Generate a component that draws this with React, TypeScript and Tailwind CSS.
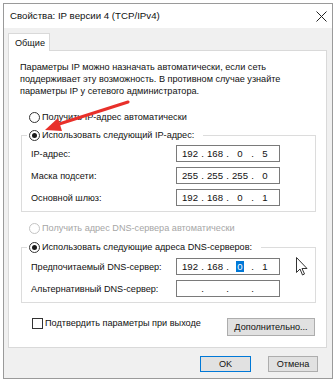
import React from "react";

const Radio = ({ checked = false, disabled = false }: { checked?: boolean; disabled?: boolean }) => (
  <span
    className={
      disabled
        ? "w-[11px] h-[11px] rounded-full border border-[#c4c4c4] bg-white flex items-center justify-center shrink-0"
        : "w-[11px] h-[11px] rounded-full border border-[#333333] bg-white flex items-center justify-center shrink-0"
    }
  >
    {checked && <span className="w-[5px] h-[5px] rounded-full bg-[#1a1a1a]" />}
  </span>
);

const IpField = ({ parts, sel = -1 }: { parts: string[]; sel?: number }) => (
  <div className="w-[104px] h-[17px] border border-[#7a7a7a] bg-white flex items-center pl-[3px] shrink-0 text-[9.6px]">
    {parts.map((p, i) => (
      <React.Fragment key={i}>
        <span className="w-[20px] text-center leading-[12px]">
          {i === sel ? <span className="bg-[#0078d7] text-white px-[1px] inline-block leading-[11px]">{p}</span> : p}
        </span>
        {i < 3 && <span className="w-[5px] text-center leading-[12px]">.</span>}
      </React.Fragment>
    ))}
  </div>
);

const Row = ({ label, parts, sel }: { label: string; parts: string[]; sel?: number }) => (
  <div className="flex items-center h-[17px]">
    <span className="w-[145px] whitespace-nowrap">{label}</span>
    <IpField parts={parts} sel={sel} />
  </div>
);

export default function App() {
  return (
    <div className="w-[336px] h-[383px] bg-white relative overflow-hidden pt-[3px] pl-[3px] font-['Liberation_Sans',sans-serif] text-[9.15px] text-[#111] leading-[12px]">
      {/* window */}
      <div className="w-[330px] h-[376px] border border-[#9a9a9a] bg-[#f0f0f0] flex flex-col">
        {/* title bar */}
        <div className="h-[24px] bg-white flex items-center justify-between pl-[6px] pr-[5px] shrink-0">
          <span className="text-[9.7px] whitespace-nowrap">Свойства: IP версии 4 (TCP/IPv4)</span>
          <svg width="11" height="11" viewBox="0 0 11 11">
            <path d="M0.5 0.5 L10.5 10.5 M10.5 0.5 L0.5 10.5" stroke="#222" strokeWidth="1" fill="none" />
          </svg>
        </div>
        {/* body */}
        <div className="flex flex-col pl-[4px] pt-[5px]">
          <div className="flex">
            <div className="h-[18px] w-[42px] border border-b-0 border-[#d9d9d9] bg-white -mb-px relative z-10 pl-[6px] flex items-center">
              Общие
            </div>
          </div>
          <div className="w-[319px] h-[298px] border border-[#d9d9d9] bg-white pl-[11px] pr-[10px] pt-[10px] flex flex-col">
            <p className="whitespace-nowrap">
              Параметры IP можно назначать автоматически, если сеть
              <br />
              поддерживает эту возможность. В противном случае узнайте
              <br />
              параметры IP у сетевого администратора.
            </p>

            <div className="flex items-center gap-[2px] h-[12px] ml-[9px] mt-[14px]">
              <Radio />
              <span className="whitespace-nowrap">Получить IP-адрес автоматически</span>
            </div>

            <fieldset className="ml-[1px] mt-[6px] border border-[#dcdcdc] pl-[9px] pt-[4px] pb-[5px] flex flex-col gap-[5px]">
              <legend className="ml-[-4px] pl-[2px] pr-[9px] h-[12px]">
                <span className="flex items-center gap-[2px]">
                  <Radio checked />
                  <span className="whitespace-nowrap">Использовать следующий IP-адрес:</span>
                </span>
              </legend>
              <Row label="IP-адрес:" parts={["192", "168", "0", "5"]} />
              <Row label="Маска подсети:" parts={["255", "255", "255", "0"]} />
              <Row label="Основной шлюз:" parts={["192", "168", "0", "1"]} />
            </fieldset>

            <div className="flex items-center gap-[2px] h-[12px] ml-[9px] mt-[10px] text-[#a6a6a6]">
              <Radio disabled />
              <span className="whitespace-nowrap">Получить адрес DNS-сервера автоматически</span>
            </div>

            <fieldset className="ml-[1px] mt-[7px] border border-[#dcdcdc] pl-[9px] pt-[5px] pb-[5px] flex flex-col gap-[5px]">
              <legend className="ml-[-4px] pl-[2px] pr-[9px] h-[12px]">
                <span className="flex items-center gap-[2px]">
                  <Radio checked />
                  <span className="whitespace-nowrap">Использовать следующие адреса DNS-серверов:</span>
                </span>
              </legend>
              <Row label="Предпочитаемый DNS-сервер:" parts={["192", "168", "0", "1"]} sel={2} />
              <Row label="Альтернативный DNS-сервер:" parts={["", "", "", ""]} />
            </fieldset>

            <div className="flex justify-between items-start mt-[14px]">
              <div className="flex items-center gap-[2px] h-[12px] ml-[12px]">
                <span className="w-[11px] h-[11px] border border-[#333333] bg-white shrink-0" />
                <span className="whitespace-nowrap">Подтвердить параметры при выходе</span>
              </div>
              <div className="mt-[1px] mr-[1px] w-[88px] h-[18px] border border-[#adadad] bg-[#e1e1e1] flex items-center justify-center whitespace-nowrap">
                Дополнительно...
              </div>
            </div>
          </div>

          <div className="flex justify-end gap-[17px] mt-[8px] pr-[14px]">
            <div className="w-[51px] h-[16px] border border-[#0078d7] bg-[#e1e1e1] flex items-center justify-center">OK</div>
            <div className="w-[50px] h-[16px] border border-[#adadad] bg-[#e1e1e1] flex items-center justify-center">Отмена</div>
          </div>
        </div>
      </div>

      {/* red arrow annotation */}
      <svg className="absolute left-0 top-0 pointer-events-none" width="336" height="383" viewBox="0 0 336 383">
        <line x1="128" y1="102" x2="56" y2="125" stroke="#e8302a" strokeWidth="3" strokeLinecap="round" />
        <polygon points="45,130 58,118 62,131" fill="#e8302a" />
      </svg>

      {/* mouse cursor */}
      <svg className="absolute left-[296px] top-[257px] pointer-events-none" width="13" height="20" viewBox="0 0 13 20">
        <path d="M0.5 0.5 L0.5 15.5 L4 12 L6.5 18 L8.5 17 L6 11.5 L11 11.5 Z" fill="#fff" stroke="#333" strokeWidth="1" strokeLinejoin="round" />
      </svg>
    </div>
  );
}
